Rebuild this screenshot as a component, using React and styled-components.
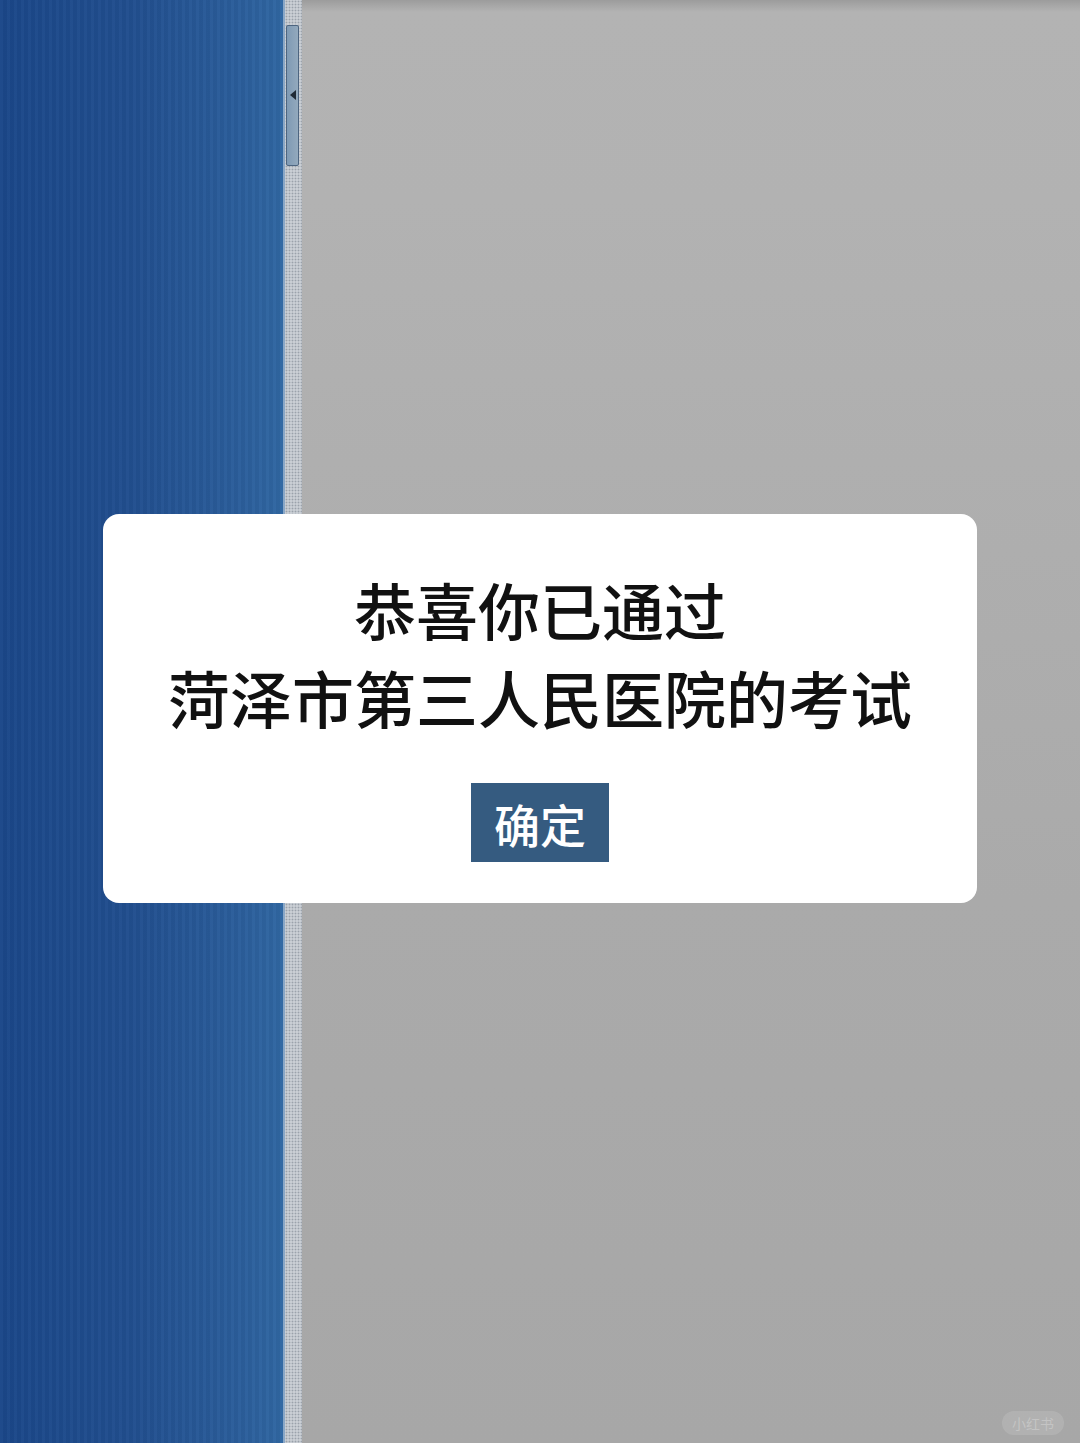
import React from "react";
import styled, { createGlobalStyle } from "styled-components";

const Global = createGlobalStyle`
  html, body { margin: 0; padding: 0; }
  body {
    font-family: "Noto Sans CJK SC", "Noto Sans", sans-serif;
    background: #a9a9a9;
  }
`;

const Page = styled.div`
  position: relative;
  display: flex;
  width: 1080px;
  height: 1443px;
  overflow: hidden;
`;

const Sidebar = styled.div`
  width: 283px;
  flex-shrink: 0;
  background:
    repeating-linear-gradient(
      90deg,
      rgba(255, 255, 255, 0.02) 0px,
      rgba(255, 255, 255, 0.02) 3px,
      rgba(0, 0, 0, 0.03) 3px,
      rgba(0, 0, 0, 0.03) 7px
    ),
    linear-gradient(90deg, #1b4789 0%, #214e8e 45%, #2b5e9b 85%, #3067a2 100%);
`;

const Splitter = styled.div`
  position: relative;
  width: 17px;
  flex-shrink: 0;
  background-color: #c9ced4;
  background-image: radial-gradient(#9aa2ab 0.8px, transparent 1.1px);
  background-size: 3px 3px;
  border-left: 2px solid #8aa7c6;
`;

const Handle = styled.div`
  position: absolute;
  top: 25px;
  left: 1px;
  width: 13px;
  height: 141px;
  background: linear-gradient(90deg, #7f9ab4, #93a9bd);
  border: 1px solid #4d6580;
  border-radius: 2px;
  display: flex;
  align-items: center;
  justify-content: center;
  box-sizing: border-box;
`;

const Arrow = styled.div`
  width: 0;
  height: 0;
  margin-top: -2px;
  border-top: 5px solid transparent;
  border-bottom: 5px solid transparent;
  border-right: 6px solid #1f2a36;
`;

const Content = styled.div`
  flex: 1;
  background: linear-gradient(180deg, #9c9c9c 0px, #b3b3b3 12px, #b2b2b2 200px, #aaaaaa 900px, #a7a7a7 100%);
`;

const Overlay = styled.div`
  position: absolute;
  top: 514px;
  left: 0;
  right: 0;
  display: flex;
  justify-content: center;
`;

const Dialog = styled.div`
  width: 874px;
  height: 389px;
  box-sizing: border-box;
  background: #ffffff;
  border-radius: 16px;
  padding-top: 51px;
  display: flex;
  flex-direction: column;
  align-items: center;
`;

const Message = styled.div`
  font-size: 62px;
  line-height: 88px;
  color: #111111;
  text-align: center;
  font-weight: 500;
`;

const ConfirmButton = styled.button`
  margin-top: 42px;
  width: 138px;
  height: 79px;
  border: none;
  background: #355b80;
  color: #ffffff;
  font-family: "Noto Sans CJK SC", "Noto Sans", sans-serif;
  font-size: 46px;
  font-weight: 500;
  padding: 0;
  cursor: pointer;
`;

const Watermark = styled.div`
  position: absolute;
  right: 16px;
  bottom: 8px;
  padding: 2px 10px;
  border-radius: 14px;
  background: rgba(255, 255, 255, 0.12);
  color: rgba(255, 255, 255, 0.25);
  font-size: 14px;
  line-height: 20px;
`;

export default function App() {
  return (
    <>
      <Global />
      <Page>
        <Sidebar />
        <Splitter>
          <Handle>
            <Arrow />
          </Handle>
        </Splitter>
        <Content />
        <Overlay>
          <Dialog>
            <Message>
              恭喜你已通过
              <br />
              菏泽市第三人民医院的考试
            </Message>
            <ConfirmButton>确定</ConfirmButton>
          </Dialog>
        </Overlay>
        <Watermark>小红书</Watermark>
      </Page>
    </>
  );
}
